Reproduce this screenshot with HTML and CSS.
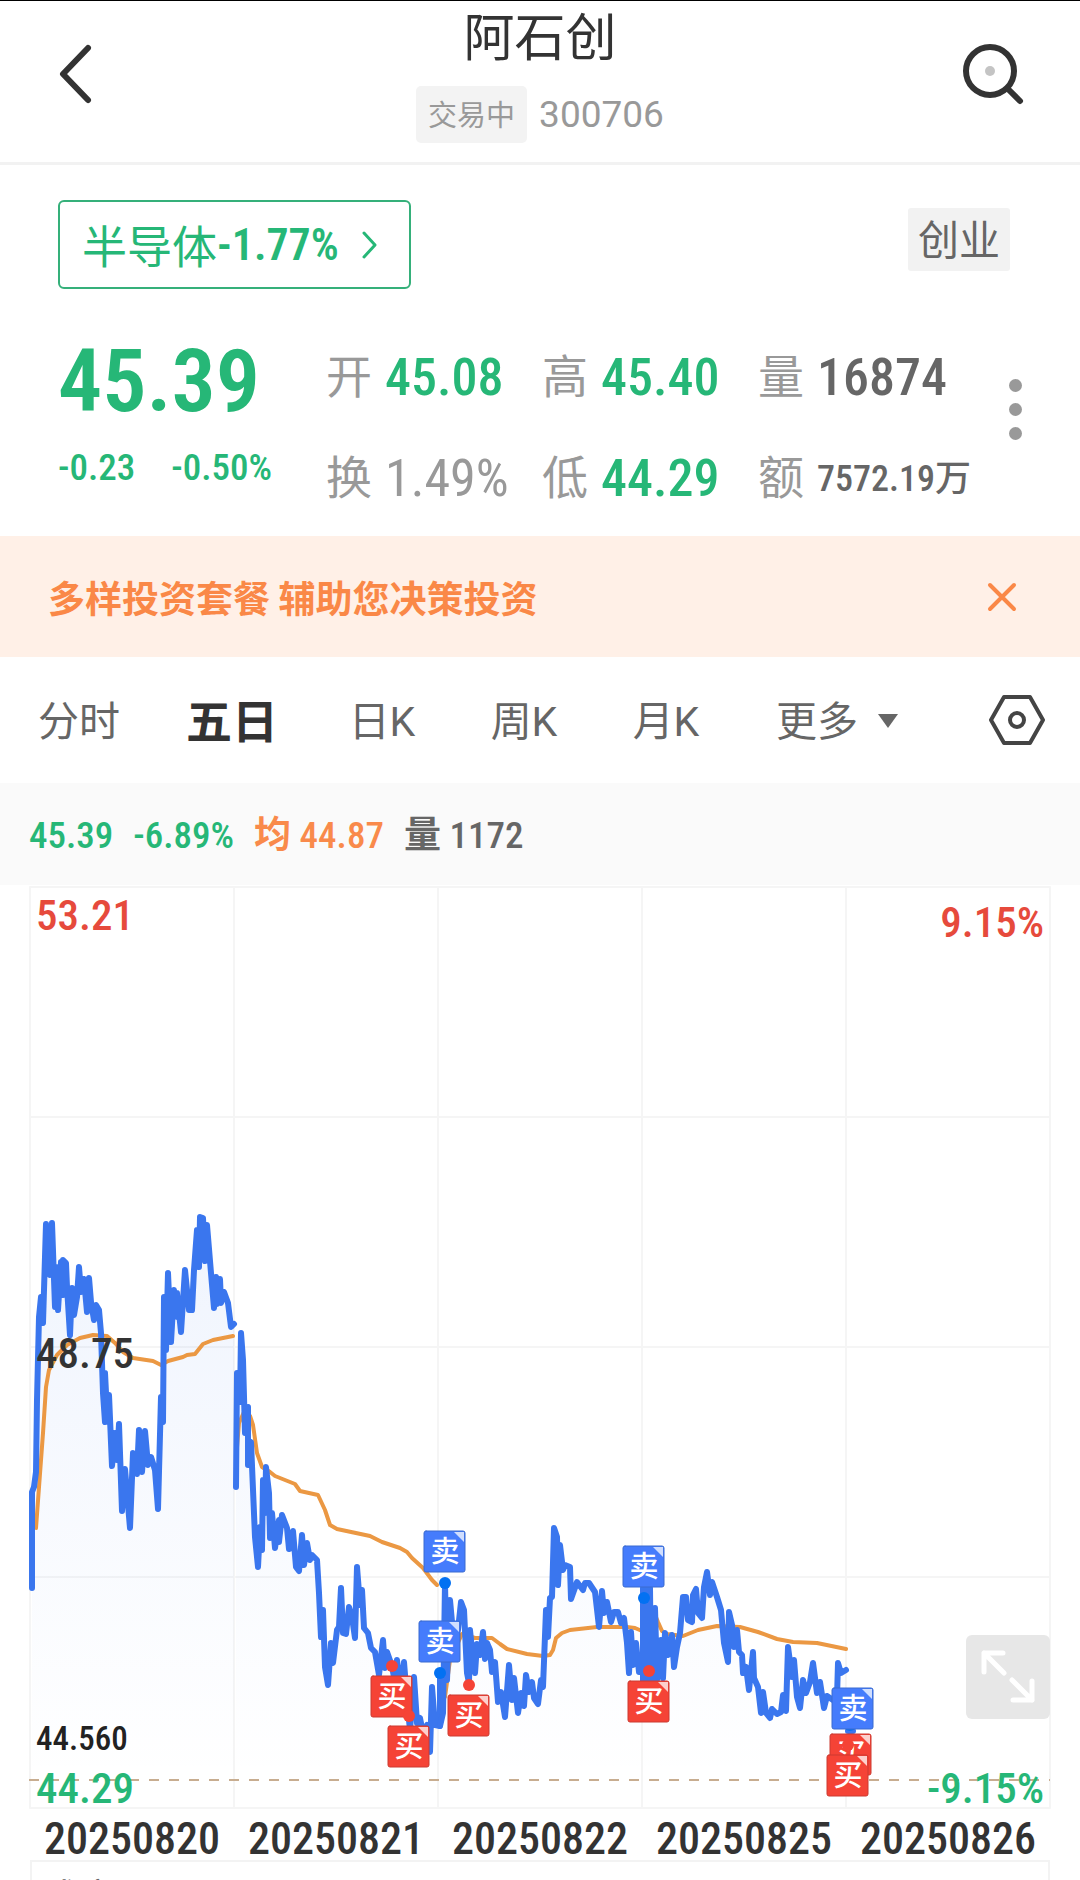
FILE: index.html
```
<!DOCTYPE html>
<html lang="zh-CN">
<head>
  <meta charset="UTF-8" />
  <meta name="viewport" content="width=device-width, initial-scale=1" />
  <title>阿石创 300706</title>
  <link rel="stylesheet" href="styles.css">
</head>
<body>

  <header class="topbar">
    <button class="icon-btn back" aria-label="返回">
      <svg width="40" height="64" viewBox="0 0 40 64"><path d="M33 6 8 32l25 26" /></svg>
    </button>
    <div class="stock">
      <h1>阿石创</h1>
      <div class="stock-sub"><span class="status">交易中</span><span class="code">300706</span></div>
    </div>
    <button class="icon-btn search" aria-label="搜索">
      <svg width="64" height="64" viewBox="0 0 64 64">
        <circle cx="29" cy="29" r="24" />
        <path d="m47 47 12 12" />
        <circle class="dot" cx="29" cy="29" r="5" />
      </svg>
    </button>
  </header>

  <section class="quote">
    <div class="quote-top">
      <a class="sector" href="#">半导体<b>-1.77%</b>
        <svg width="18" height="30" viewBox="0 0 18 30"><path d="m3 3 11 12L3 27" /></svg>
      </a>
      <span class="board">创业</span>
    </div>
    <div class="quote-body">
      <div class="price">
        <strong>45.39</strong>
        <div class="change"><span>-0.23</span><span>-0.50%</span></div>
      </div>
      <dl class="stats">
        <div><dt>开</dt><dd class="down">45.08</dd></div>
        <div><dt>高</dt><dd class="down">45.40</dd></div>
        <div><dt>量</dt><dd>16874</dd></div>
        <div><dt>换</dt><dd class="muted">1.49%</dd></div>
        <div><dt>低</dt><dd class="down">44.29</dd></div>
        <div><dt>额</dt><dd class="small">7572.19万</dd></div>
      </dl>
      <button class="more" aria-label="更多行情"><i></i><i></i><i></i></button>
    </div>
  </section>

  <div class="banner">
    <a href="#">多样投资套餐 辅助您决策投资</a>
    <button class="icon-btn" aria-label="关闭">
      <svg width="32" height="32" viewBox="0 0 32 32"><path d="m4 4 24 24M28 4 4 28" /></svg>
    </button>
  </div>

  <nav class="tabs">
    <button>分时</button>
    <button class="active">五日</button>
    <button>日K</button>
    <button>周K</button>
    <button>月K</button>
    <button class="drop">更多<svg width="24" height="16" viewBox="0 0 24 16"><path d="M2 1h20L12 15z" /></svg></button>
    <button class="setting" aria-label="设置">
      <svg width="56" height="52" viewBox="0 0 56 52">
        <path d="M15 3h26l13 23-13 23H15L2 26z" />
        <circle cx="28" cy="26" r="7" />
      </svg>
    </button>
  </nav>

  <div class="legend">
    <span class="down">45.39</span>
    <span class="down">-6.89%</span>
    <span class="avg"><b>均</b> 44.87</span>
    <span><b>量</b> 1172</span>
  </div>

  <div class="chart">
    <svg id="chart" viewBox="0 885 1080 924">
      <defs>
        <linearGradient id="fade" gradientUnits="userSpaceOnUse" x1="0" y1="1210" x2="0" y2="1780">
          <stop offset="0" stop-color="#3a76ee" stop-opacity="0.08" />
          <stop offset="1" stop-color="#3a76ee" stop-opacity="0" />
        </linearGradient>
      </defs>
      <path class="grid" d="M30 887H1050V1808H30zM30 1117H1050M30 1347H1050M30 1577H1050M234 887V1808M438 887V1808M642 887V1808M846 887V1808" />
      <g id="areas"></g>
      <g id="averages"></g>
      <g id="prices"></g>
      <path class="low-line" d="M29 1780H1050" />
      <g id="trades"></g>
      <text class="up" x="36" y="930">53.21</text>
      <text class="up end" x="1044" y="937">9.15%</text>
      <text x="36" y="1368">48.75</text>
      <text class="low" x="36" y="1750">44.560</text>
      <text class="down" x="36" y="1803">44.29</text>
      <text class="down end" x="1044" y="1803">-9.15%</text>
    </svg>
    <button class="expand" aria-label="全屏">
      <svg width="84" height="84" viewBox="0 0 84 84"><path d="M37 18H18v19M18 18l20 20M47 65h19V46M66 65 46 45" /></svg>
    </button>
  </div>

  <div class="dates">
    <span>20250820</span><span>20250821</span><span>20250822</span><span>20250825</span><span>20250826</span>
  </div>

  <section class="volume"><h2>成交量</h2></section>

  <script src="chart.js"></script>
</body>
</html>
```
FILE: styles.css
```
* { box-sizing: border-box; }
body {
  margin: 0;
  height: 100vh;
  overflow: hidden;
  display: flex;
  flex-direction: column;
  background: #fff;
  color: #666;
  font-family: "Roboto Condensed", "Noto Sans CJK SC", sans-serif;
}
h1, h2, dl, dd { margin: 0; }
a { color: inherit; text-decoration: none; }
button {
  padding: 0;
  border: 0;
  background: none;
  color: inherit;
  font: inherit;
  cursor: pointer;
}
svg { display: block; fill: none; stroke-linecap: round; stroke-linejoin: round; }
.down { color: #26b777; fill: #26b777; }
.up { fill: #e64a3c; }

/* header */
.topbar {
  flex: none;
  display: flex;
  justify-content: space-between;
  height: 165px;
  padding: 0 55px;
  border-top: 1px solid #000;
  border-bottom: 3px solid #f2f2f2;
}
.icon-btn { flex: none; align-self: center; }
.topbar .icon-btn { width: 64px; height: 64px; margin-bottom: 16px; stroke: #333; stroke-width: 6; }
.topbar .back { padding-right: 8px; }
.search .dot { fill: #c4c4c4; stroke: none; }
.stock { text-align: center; }
.stock h1 {
  color: #333;
  font-size: 51px;
  font-weight: 400;
  line-height: 75px;
  margin-bottom: 10px;
}
.stock-sub { display: flex; align-items: center; gap: 12px; color: #999; }
.status {
  height: 57px;
  padding: 0 12px;
  border-radius: 5px;
  background: #f3f3f3;
  font-size: 29px;
  line-height: 60px;
}
.code { font-family: Roboto, sans-serif; font-size: 37px; }

/* quote */
.quote { flex: none; height: 371px; padding: 35px 58px 0; }
.quote-top { display: flex; justify-content: space-between; }
.sector {
  display: flex;
  align-items: center;
  height: 89px;
  padding: 0 30px 0 22px;
  border: 2px solid #35b07a;
  border-radius: 6px;
  color: #26b777;
  font-size: 45px;
}
.sector b { font-size: 44px; font-weight: 600; }
.sector svg { margin-left: 22px; stroke: #26b777; stroke-width: 3; }
.board {
  align-self: flex-start;
  height: 63px;
  margin: 8px 12px 0 0;
  padding: 0 10px;
  background: #f2f2f2;
  border-radius: 3px;
  font-size: 41px;
  line-height: 66px;
}
.quote-body { display: flex; margin-top: 38px; }
.price { width: 268px; margin-top: 4px; color: #26b777; }
.price strong { display: block; font-size: 88px; font-weight: 600; line-height: 100px; }
.change { display: flex; gap: 36px; margin-top: 14px; font-size: 37px; font-weight: 500; line-height: 46px; }
.stats { display: grid; grid-template-columns: repeat(3, 216px); }
.stats div { display: flex; align-items: center; gap: 13px; height: 101px; }
.stats dt { padding-bottom: 10px; color: #999; font-size: 46px; }
.stats dd { font-size: 52px; font-weight: 500; }
.stats .muted { color: #999; font-weight: 400; }
.stats .small { padding-bottom: 8px; font-size: 36px; white-space: nowrap; }
.more { margin: 52px 0 0 auto; align-self: flex-start; }
.more i { display: block; width: 13px; height: 13px; margin-bottom: 11px; border-radius: 50%; background: #999; }

/* promo banner */
.banner {
  flex: none;
  display: flex;
  align-items: center;
  justify-content: space-between;
  height: 121px;
  padding: 0 62px 0 48px;
  background: #fff0e7;
  color: #fa8847;
  font-size: 37px;
  font-weight: 700;
}
.banner svg { stroke: #fa8847; stroke-width: 4; }

/* period tabs */
.tabs {
  flex: none;
  display: flex;
  align-items: center;
  gap: 66px;
  height: 126px;
  padding: 0 35px 0 38px;
  font-family: Roboto, "Noto Sans CJK SC", sans-serif;
  font-size: 41px;
}
.tabs button { min-width: 76px; padding-bottom: 4px; }
.tabs .active { color: #333; font-size: 46px; font-weight: 700; }
.tabs .drop { display: flex; align-items: center; gap: 18px; margin-left: 6px; }
.drop svg { margin-top: 6px; fill: #666; }
.tabs .setting { min-width: 0; margin-left: auto; padding: 0; }
.setting svg { stroke: #444; stroke-width: 4; }

.legend {
  flex: none;
  display: flex;
  align-items: baseline;
  gap: 20px;
  height: 102px;
  padding: 0 29px;
  background: #fafafa;
  font-size: 37px;
  font-weight: 500;
  line-height: 106px;
}
.legend .avg { color: #f98a4b; }
.legend b { font-size: 37px; }

/* five day chart */
.chart { flex: none; position: relative; }
.chart text { fill: #333; font-size: 43px; font-weight: 500; }
.chart text.up { fill: #e64a3c; }
.chart text.down { fill: #26b777; }
.chart text.low { fill: #222; font-size: 33px; }
.chart text.end { text-anchor: end; }
.grid { stroke: #f5f5f5; stroke-width: 2; }
.low-line { stroke: #c8ad90; stroke-width: 2; stroke-dasharray: 10 10; stroke-linecap: butt; }
#areas { fill: url(#fade); }
#averages { stroke: #eb9843; stroke-width: 4; }
#prices { stroke: #3a76ee; stroke-width: 6; }
.sell { fill: #457cfc; stroke: #3a6bd0; }
.buy { fill: #f54336; stroke: #cc3a30; }
.sell-dot { fill: #0371f2; }
.buy-dot { fill: #f54336; }
.fold { fill: #fff; fill-opacity: 0.75; }
.chart text.trade { fill: #fff; font-size: 29px; text-anchor: middle; }
.expand {
  position: absolute;
  right: 30px;
  bottom: 90px;
  border-radius: 6px;
  background: #e7e7e7;
}
.expand svg { stroke: #fff; stroke-width: 5; }

.dates {
  flex: none;
  display: grid;
  grid-template-columns: repeat(5, 1fr);
  height: 51px;
  padding: 0 30px;
  color: #333;
  font-size: 44px;
  font-weight: 500;
  line-height: 60px;
  text-align: center;
}

.volume {
  flex: 1;
  margin: 0 30px;
  padding: 16px 10px;
  border: 2px solid #f3f3f3;
  border-bottom: 0;
  overflow: hidden;
}
.volume h2 { font-size: 38px; font-weight: 400; line-height: 40px; }
```
FILE: chart.js
```
// one entry per trading day: x,y pairs
const prices = [
  "32,1588 32,1492 34,1487 36,1472 37,1400 39,1317 41,1297 43,1323 46,1224 50,1275 52,1223 55,1307 56,1267 58,1310 61,1262 63,1295 63,1260 66,1263 67,1287 70,1335 72,1288 74,1315 77,1297 79,1267 81,1292 84,1279 87,1312 89,1278 91,1302 94,1320 96,1305 99,1310 101,1333 103,1393 105,1422 105,1373 107,1413 109,1395 112,1466 115,1433 117,1460 119,1424 122,1511 125,1469 130,1528 133,1453 137,1474 139,1430 142,1472 145,1431 148,1465 151,1457 155,1470 158,1509 161,1397 163,1422 164,1297 166,1350 168,1273 171,1342 174,1290 177,1317 177,1293 181,1332 185,1270 189,1310 192,1310 194,1270 197,1230 199,1267 200,1217 203,1218 205,1261 207,1225 211,1273 214,1308 216,1277 217,1304 220,1279 221,1303 224,1292 228,1303 231,1327 234,1324",
  "236,1487 237,1373 240,1402 241,1333 243,1360 245,1433 248,1407 248,1465 251,1442 255,1537 258,1567 260,1527 262,1550 263,1480 265,1513 266,1467 269,1493 270,1538 272,1513 275,1548 279,1520 279,1542 282,1515 287,1528 289,1549 291,1548 293,1531 296,1567 299,1571 302,1535 304,1565 307,1543 310,1560 312,1555 317,1560 319,1593 321,1637 323,1610 325,1667 328,1685 331,1643 333,1663 337,1630 339,1627 341,1588 343,1633 346,1634 349,1607 352,1617 355,1638 357,1567 360,1605 362,1590 364,1628 368,1633 371,1648 375,1652 379,1675 383,1640 385,1668 387,1652 392,1666 395,1683 397,1660 400,1693 404,1662 407,1700 410,1730 414,1677 417,1723 420,1718 423,1733 427,1725 430,1752 432,1687 435,1725 440,1726 440,1673",
  "440,1726 443,1713 444,1650 445,1583 447,1680 450,1600 453,1633 458,1630 461,1602 464,1610 467,1673 469,1683 470,1630 473,1660 475,1673 477,1644 480,1655 483,1632 485,1659 487,1643 490,1650 492,1672 495,1662 498,1702 501,1692 505,1717 509,1665 512,1700 514,1678 518,1713 521,1693 524,1706 526,1675 529,1692 532,1682 534,1698 538,1704 541,1680 543,1687 546,1610 548,1637 550,1598 552,1597 554,1528 557,1537 558,1585 560,1545 563,1570 565,1565 570,1567 571,1599 577,1582 583,1590 585,1583 589,1583 595,1592 599,1627 602,1591 604,1613 607,1602 611,1622 614,1612 618,1612 621,1623 624,1618 627,1643 629,1673 631,1632 633,1665 636,1643 639,1672 641,1672",
  "643,1682 643,1588 645,1588 646,1682 648,1588 650,1588 651,1682 655,1608 657,1680 661,1640 663,1678 665,1633 668,1655 672,1635 674,1667 677,1647 680,1633 683,1597 686,1597 688,1620 692,1622 693,1595 696,1589 698,1613 702,1618 704,1587 707,1572 710,1595 712,1582 717,1597 721,1610 724,1643 728,1662 729,1612 732,1625 734,1647 737,1630 739,1652 742,1655 743,1673 746,1667 749,1690 753,1652 754,1678 758,1687 761,1713 763,1692 766,1713 770,1718 772,1709 777,1714 781,1712 783,1695 786,1711 788,1647 792,1677 794,1660 797,1697 800,1708 803,1680 806,1693 810,1682 813,1663 817,1693 820,1682 824,1708 827,1696 833,1700 837,1697 838,1663 841,1673 846,1670"
];

const averages = [
  "36,1528 39,1487 43,1433 46,1387 49,1370 57,1355 67,1345 80,1338 93,1335 107,1336 115,1343 123,1352 133,1358 153,1361 161,1365 168,1361 183,1357 187,1355 195,1354 203,1344 213,1340 233,1336",
  "237,1447 239,1423 244,1412 250,1416 253,1425 257,1453 262,1467 270,1472 275,1476 295,1484 300,1491 318,1495 325,1510 330,1525 337,1529 370,1536 382,1542 400,1548 407,1552 412,1558 423,1568 432,1580 437,1585",
  "445,1697 450,1660 462,1634 475,1638 492,1638 500,1644 507,1649 527,1654 543,1656 550,1655 553,1650 556,1638 562,1633 570,1630 597,1627 627,1627 635,1628 642,1631",
  "653,1610 658,1622 662,1631 667,1634 683,1636 698,1630 717,1626 740,1627 758,1632 777,1639 793,1642 817,1643 846,1649"
];

// type, dot x, dot y, box x, box y
const trades = [
  ["buy", 392, 1666, 371, 1676],
  ["buy", 409, 1716, 388, 1726],
  ["sell", 445, 1583, 424, 1531],
  ["sell", 440, 1673, 419, 1621],
  ["buy", 469, 1685, 448, 1695],
  ["sell", 644, 1598, 623, 1546],
  ["buy", 649, 1671, 628, 1681],
  ["buy", 851, 1724, 830, 1734],
  ["sell", 850, 1725, 832, 1688],
  ["buy", 848, 1745, 827, 1755]
];

const line = points => `<polyline points="${points}" />`;

document.getElementById("areas").innerHTML = prices.map(points => {
  const first = points.split(",")[0];
  const last = points.split(" ").pop().split(",")[0];
  return `<polygon points="${first},1780 ${points} ${last},1780" />`;
}).join("");
document.getElementById("prices").innerHTML = prices.map(line).join("") + line("848,1731 853,1731");
document.getElementById("averages").innerHTML = averages.map(line).join("");

// later trades cover earlier ones
document.getElementById("trades").innerHTML = trades.map(([type, cx, cy, x, y]) => `
  <circle class="${type}-dot" cx="${cx}" cy="${cy}" r="6" />
  <rect class="${type}" x="${x}" y="${y}" width="41" height="41" rx="2" />
  <path class="fold" d="M${x + 30} ${y + 1}h10v10z" />
  <text class="trade" x="${x + 21}" y="${y + 31}">${type === "sell" ? "卖" : "买"}</text>
`).join("");
```
